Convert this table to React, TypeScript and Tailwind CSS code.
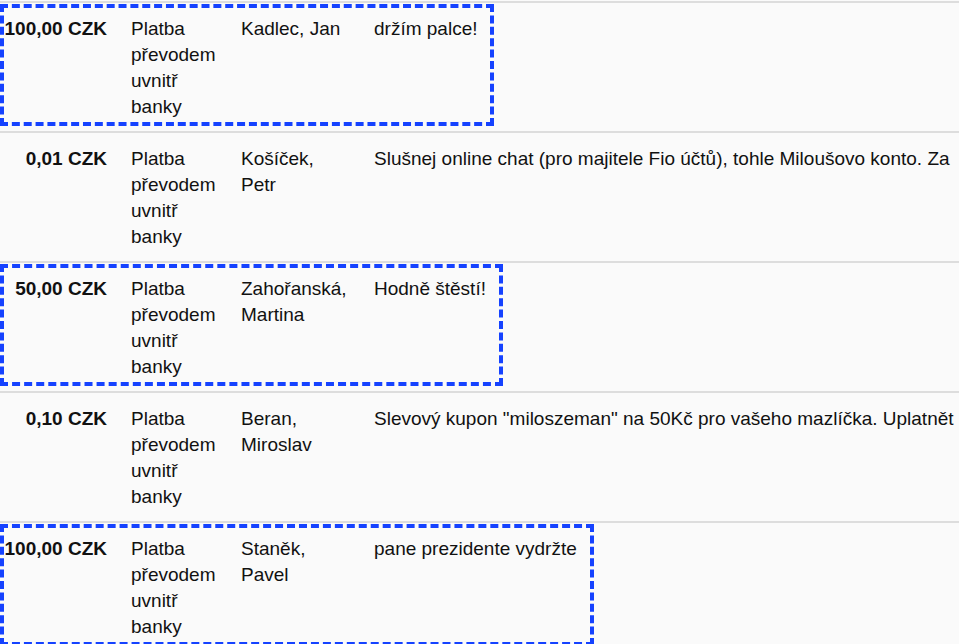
const payments = [
  {
    amount: "100,00 CZK",
    type: "Platba převodem uvnitř banky",
    name: "Kadlec, Jan",
    message: "držím palce!",
    marked: true
  },
  {
    amount: "0,01 CZK",
    type: "Platba převodem uvnitř banky",
    name: "Košíček, Petr",
    message: "Slušnej online chat (pro majitele Fio účtů), tohle Miloušovo konto. Za",
    marked: false
  },
  {
    amount: "50,00 CZK",
    type: "Platba převodem uvnitř banky",
    name: "Zahořanská, Martina",
    message: "Hodně štěstí!",
    marked: true
  },
  {
    amount: "0,10 CZK",
    type: "Platba převodem uvnitř banky",
    name: "Beran, Miroslav",
    message: 'Slevový kupon "miloszeman" na 50Kč pro vašeho mazlíčka. Uplatnět',
    marked: false
  },
  {
    amount: "100,00 CZK",
    type: "Platba převodem uvnitř banky",
    name: "Staněk, Pavel",
    message: "pane prezidente vydržte",
    marked: true
  }
];

type Payment = (typeof payments)[number];

function Row({ p }: { p: Payment }) {
  const cells = (
    <>
      <div
        className={
          p.marked
            ? "w-[103px] shrink-0 whitespace-nowrap text-right font-bold"
            : "w-[107px] shrink-0 whitespace-nowrap text-right font-bold"
        }
      >
        {p.amount}
      </div>
      <div className="ml-[24px] w-[110px] shrink-0 pr-3">{p.type}</div>
      <div className="w-[133px] shrink-0 pr-[22px]">{p.name}</div>
      <div className="whitespace-nowrap">{p.message}</div>
    </>
  );

  return (
    <div className="border-t-2 border-[#dddddd]">
      {p.marked ? (
        <div className="mt-px mb-[5px] flex w-fit border-4 border-dashed border-[#1542ff] pt-[8px] pb-[2px] pr-[13px]">
          {cells}
        </div>
      ) : (
        <div className="flex pt-[13px] pb-[11px]">{cells}</div>
      )}
    </div>
  );
}

export default function App() {
  return (
    <main
      className="h-[644px] w-[959px] overflow-hidden bg-[#fafafa] pt-px text-[19px] leading-[26px] text-[#111]"
      style={{ fontFamily: '"Liberation Sans", Arial, sans-serif' }}
    >
      {payments.map((p, i) => (
        <Row key={i} p={p} />
      ))}
    </main>
  );
}
